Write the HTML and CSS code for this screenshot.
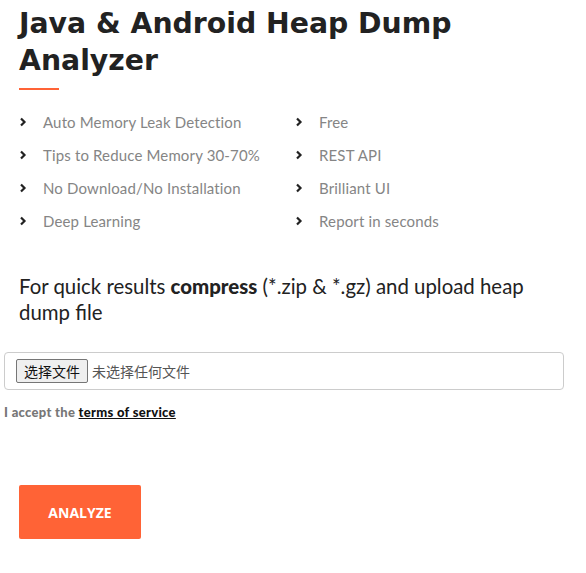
FILE: index.html
```html
<!DOCTYPE html>
<html>
<head>
<meta charset="utf-8">
<link rel="stylesheet" href="styles.css">
</head>
<body>
<main class="page">
  <section class="intro">
    <h1 class="title">Java &amp; Android Heap Dump Analyzer</h1>
    <div class="rule"></div>
    <ul class="features">
      <li><svg class="chev" viewBox="0 0 8 10"><polyline points="2,1.5 5.5,5 2,8.5"/></svg>Auto Memory Leak Detection</li>
      <li><svg class="chev" viewBox="0 0 8 10"><polyline points="2,1.5 5.5,5 2,8.5"/></svg>Free</li>
      <li><svg class="chev" viewBox="0 0 8 10"><polyline points="2,1.5 5.5,5 2,8.5"/></svg>Tips to Reduce Memory 30-70%</li>
      <li><svg class="chev" viewBox="0 0 8 10"><polyline points="2,1.5 5.5,5 2,8.5"/></svg>REST API</li>
      <li><svg class="chev" viewBox="0 0 8 10"><polyline points="2,1.5 5.5,5 2,8.5"/></svg>No Download/No Installation</li>
      <li><svg class="chev" viewBox="0 0 8 10"><polyline points="2,1.5 5.5,5 2,8.5"/></svg>Brilliant UI</li>
      <li><svg class="chev" viewBox="0 0 8 10"><polyline points="2,1.5 5.5,5 2,8.5"/></svg>Deep Learning</li>
      <li><svg class="chev" viewBox="0 0 8 10"><polyline points="2,1.5 5.5,5 2,8.5"/></svg>Report in seconds</li>
    </ul>
    <p class="lead">For quick results <b>compress</b> (*.zip &amp; *.gz) and upload heap dump file</p>
  </section>
  <form class="upload">
    <div class="filebox">
      <span class="filebtn">选择文件</span>
      <span class="filename">未选择任何文件</span>
    </div>
    <p class="terms">I accept the <a href="#">terms of service</a></p>
    <div class="actions">
      <button type="button" class="analyze">ANALYZE</button>
    </div>
  </form>
</main>
</body>
</html>
```

FILE: styles.css
```css
* { box-sizing: border-box; }
body {
  margin: 0;
  background: #fff;
  font-family: "Open Sans", "Noto Sans", sans-serif;
}
.page {
  padding: 0 22px 0 4px;
}
.intro {
  padding: 0 15px;
}
.title {
  margin: 0;
  padding-top: 5px;
  font-family: "DejaVu Sans", sans-serif;
  font-weight: bold;
  font-size: 28.3px;
  line-height: 37px;
  color: #222;
  max-width: 470px;
}
.rule {
  width: 40px;
  height: 2px;
  background: #ff6336;
  margin-top: 9px;
}
.features {
  list-style: none;
  margin: 22px 0 0;
  padding: 0;
  display: grid;
  grid-template-columns: 276px 1fr;
  row-gap: 13px;
}
.features li {
  display: flex;
  align-items: center;
  height: 20px;
  font-family: "Lato", sans-serif;
  font-size: 15px;
  letter-spacing: 0.15px;
  color: #858585;
}
.chev {
  width: 8px;
  height: 10px;
  margin-right: 16px;
  fill: none;
  stroke: #222;
  stroke-width: 2.2;
}
.lead {
  margin: 42px 0 0;
  font-family: "Lato", sans-serif;
  font-size: 20.4px;
  line-height: 26px;
  color: #222;
  max-width: 530px;
}
.lead b { font-weight: 900; }
.upload {
  margin-top: 27px;
}
.filebox {
  display: flex;
  align-items: center;
  height: 38px;
  border: 1px solid #ccc;
  border-radius: 4px;
  padding: 0 11px;
}
.filebtn {
  font-family: "Noto Sans CJK SC", sans-serif;
  font-size: 14px;
  color: #111;
  background: #efefef;
  border: 1px solid #767676;
  border-radius: 2px;
  padding: 0 7px;
  height: 24px;
  line-height: 22px;
}
.filename {
  font-family: "Noto Sans CJK SC", sans-serif;
  font-size: 14px;
  color: #555;
  margin-left: 4px;
}
.terms {
  margin: 14px 0 0;
  font-family: "Lato", sans-serif;
  font-weight: 900;
  font-size: 13px;
  letter-spacing: 0.3px;
  color: #777;
}
.terms a {
  color: #111;
  text-decoration: underline;
}
.actions {
  padding: 65px 15px 0;
}
.analyze {
  width: 122px;
  height: 54px;
  border: 0;
  border-radius: 2px;
  background: #ff6336;
  color: #fff;
  font-family: "Open Sans", sans-serif;
  font-weight: bold;
  font-size: 14px;
}
```
